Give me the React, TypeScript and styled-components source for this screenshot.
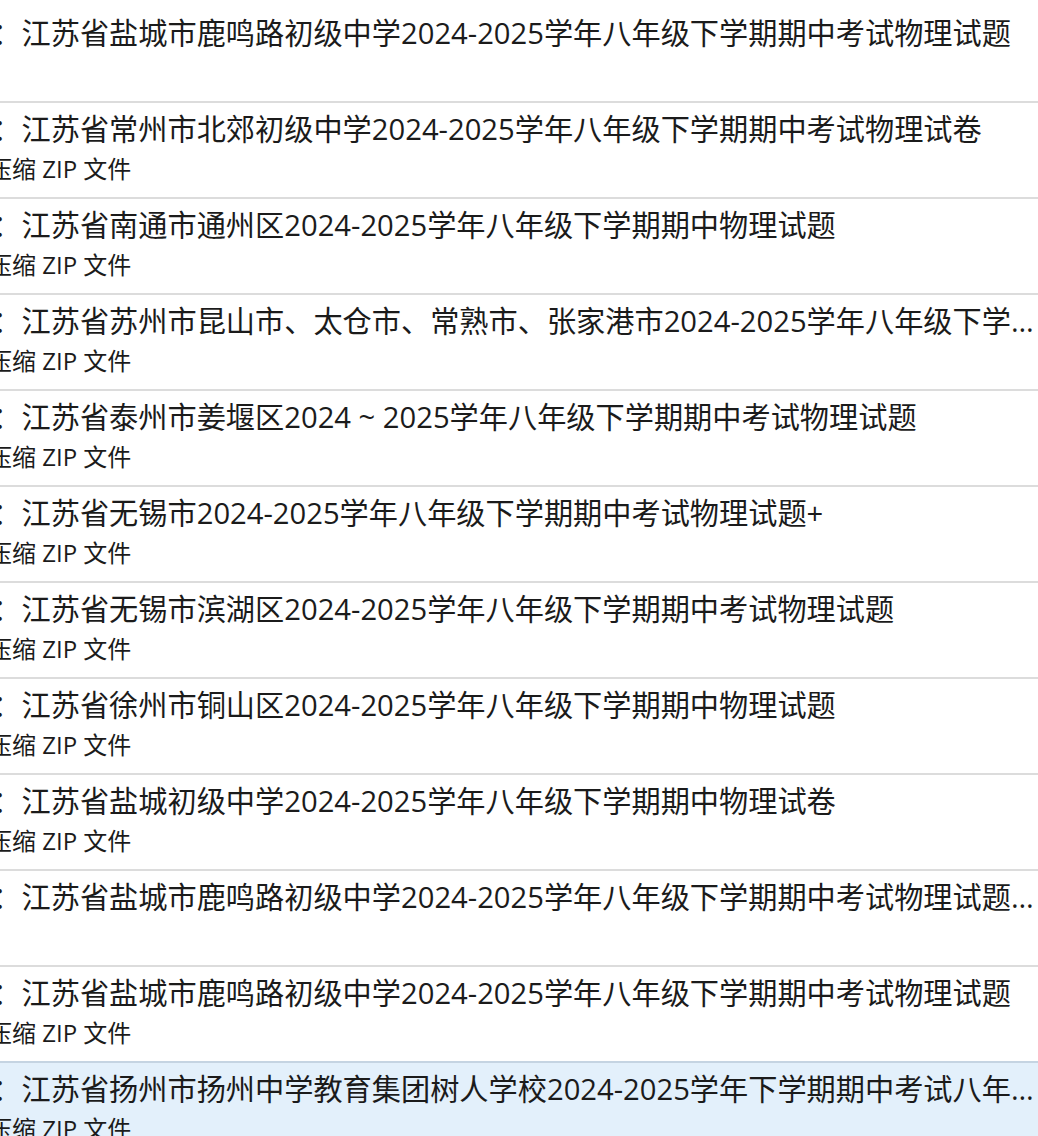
import styled, { createGlobalStyle } from 'styled-components'

const GlobalStyle = createGlobalStyle`
    html, body {
        margin: 0;
        padding: 0;
        background: #ffffff;
    }
    body {
        width: 1038px;
        height: 1136px;
        overflow: hidden;
        font-family: "Open Sans", "Noto Sans CJK SC", sans-serif;
        color: #1b1b1b;
    }
`

type FileItem = {
    name: string
    kind?: string
    selected?: boolean
}

const files: FileItem[] = [
    { name: '江苏省盐城市鹿鸣路初级中学2024-2025学年八年级下学期期中考试物理试题' },
    { name: '江苏省常州市北郊初级中学2024-2025学年八年级下学期期中考试物理试卷', kind: '压缩 ZIP 文件' },
    { name: '江苏省南通市通州区2024-2025学年八年级下学期期中物理试题', kind: '压缩 ZIP 文件' },
    {
        name: '江苏省苏州市昆山市、太仓市、常熟市、张家港市2024-2025学年八年级下学期期中物理试题',
        kind: '压缩 ZIP 文件',
    },
    { name: '江苏省泰州市姜堰区2024 ~ 2025学年八年级下学期期中考试物理试题', kind: '压缩 ZIP 文件' },
    { name: '江苏省无锡市2024-2025学年八年级下学期期中考试物理试题+', kind: '压缩 ZIP 文件' },
    { name: '江苏省无锡市滨湖区2024-2025学年八年级下学期期中考试物理试题', kind: '压缩 ZIP 文件' },
    { name: '江苏省徐州市铜山区2024-2025学年八年级下学期期中物理试题', kind: '压缩 ZIP 文件' },
    { name: '江苏省盐城初级中学2024-2025学年八年级下学期期中物理试卷', kind: '压缩 ZIP 文件' },
    { name: '江苏省盐城市鹿鸣路初级中学2024-2025学年八年级下学期期中考试物理试题（含答案）' },
    { name: '江苏省盐城市鹿鸣路初级中学2024-2025学年八年级下学期期中考试物理试题', kind: '压缩 ZIP 文件' },
    {
        name: '江苏省扬州市扬州中学教育集团树人学校2024-2025学年下学期期中考试八年级物理试题',
        kind: '压缩 ZIP 文件',
        selected: true,
    },
]

const List = styled.div`
    display: flex;
    flex-direction: column;
    margin-top: 5px;
`

const Row = styled.div<{ $selected?: boolean }>`
    display: flex;
    flex-direction: column;
    gap: 7px;
    flex: none;
    height: 96px;
    padding: 8px 3px 0 0;
    box-sizing: border-box;
    border-top: 2px solid ${(p) => (p.$selected ? '#c5d4e2' : '#dcdcdc')};
    background: ${(p) => (p.$selected ? '#e3f0fb' : 'transparent')};

    &:first-child {
        border-top: none;
        padding-top: 10px;
    }
`

const Title = styled.div`
    margin-left: -66px;
    font-size: 29.2px;
    line-height: 36px;
    white-space: nowrap;
    overflow: hidden;
    text-overflow: ellipsis;
`

const Kind = styled.div`
    margin-left: -84px;
    font-size: 24px;
    line-height: 30px;
    white-space: nowrap;
    overflow: hidden;
`

export default function App() {
    return (
        <>
            <GlobalStyle />
            <List>
                {files.map((f, i) => (
                    <Row key={i} $selected={f.selected}>
                        <Title>名称：{f.name}</Title>
                        {f.kind && <Kind>类型：{f.kind}</Kind>}
                    </Row>
                ))}
            </List>
        </>
    )
}
